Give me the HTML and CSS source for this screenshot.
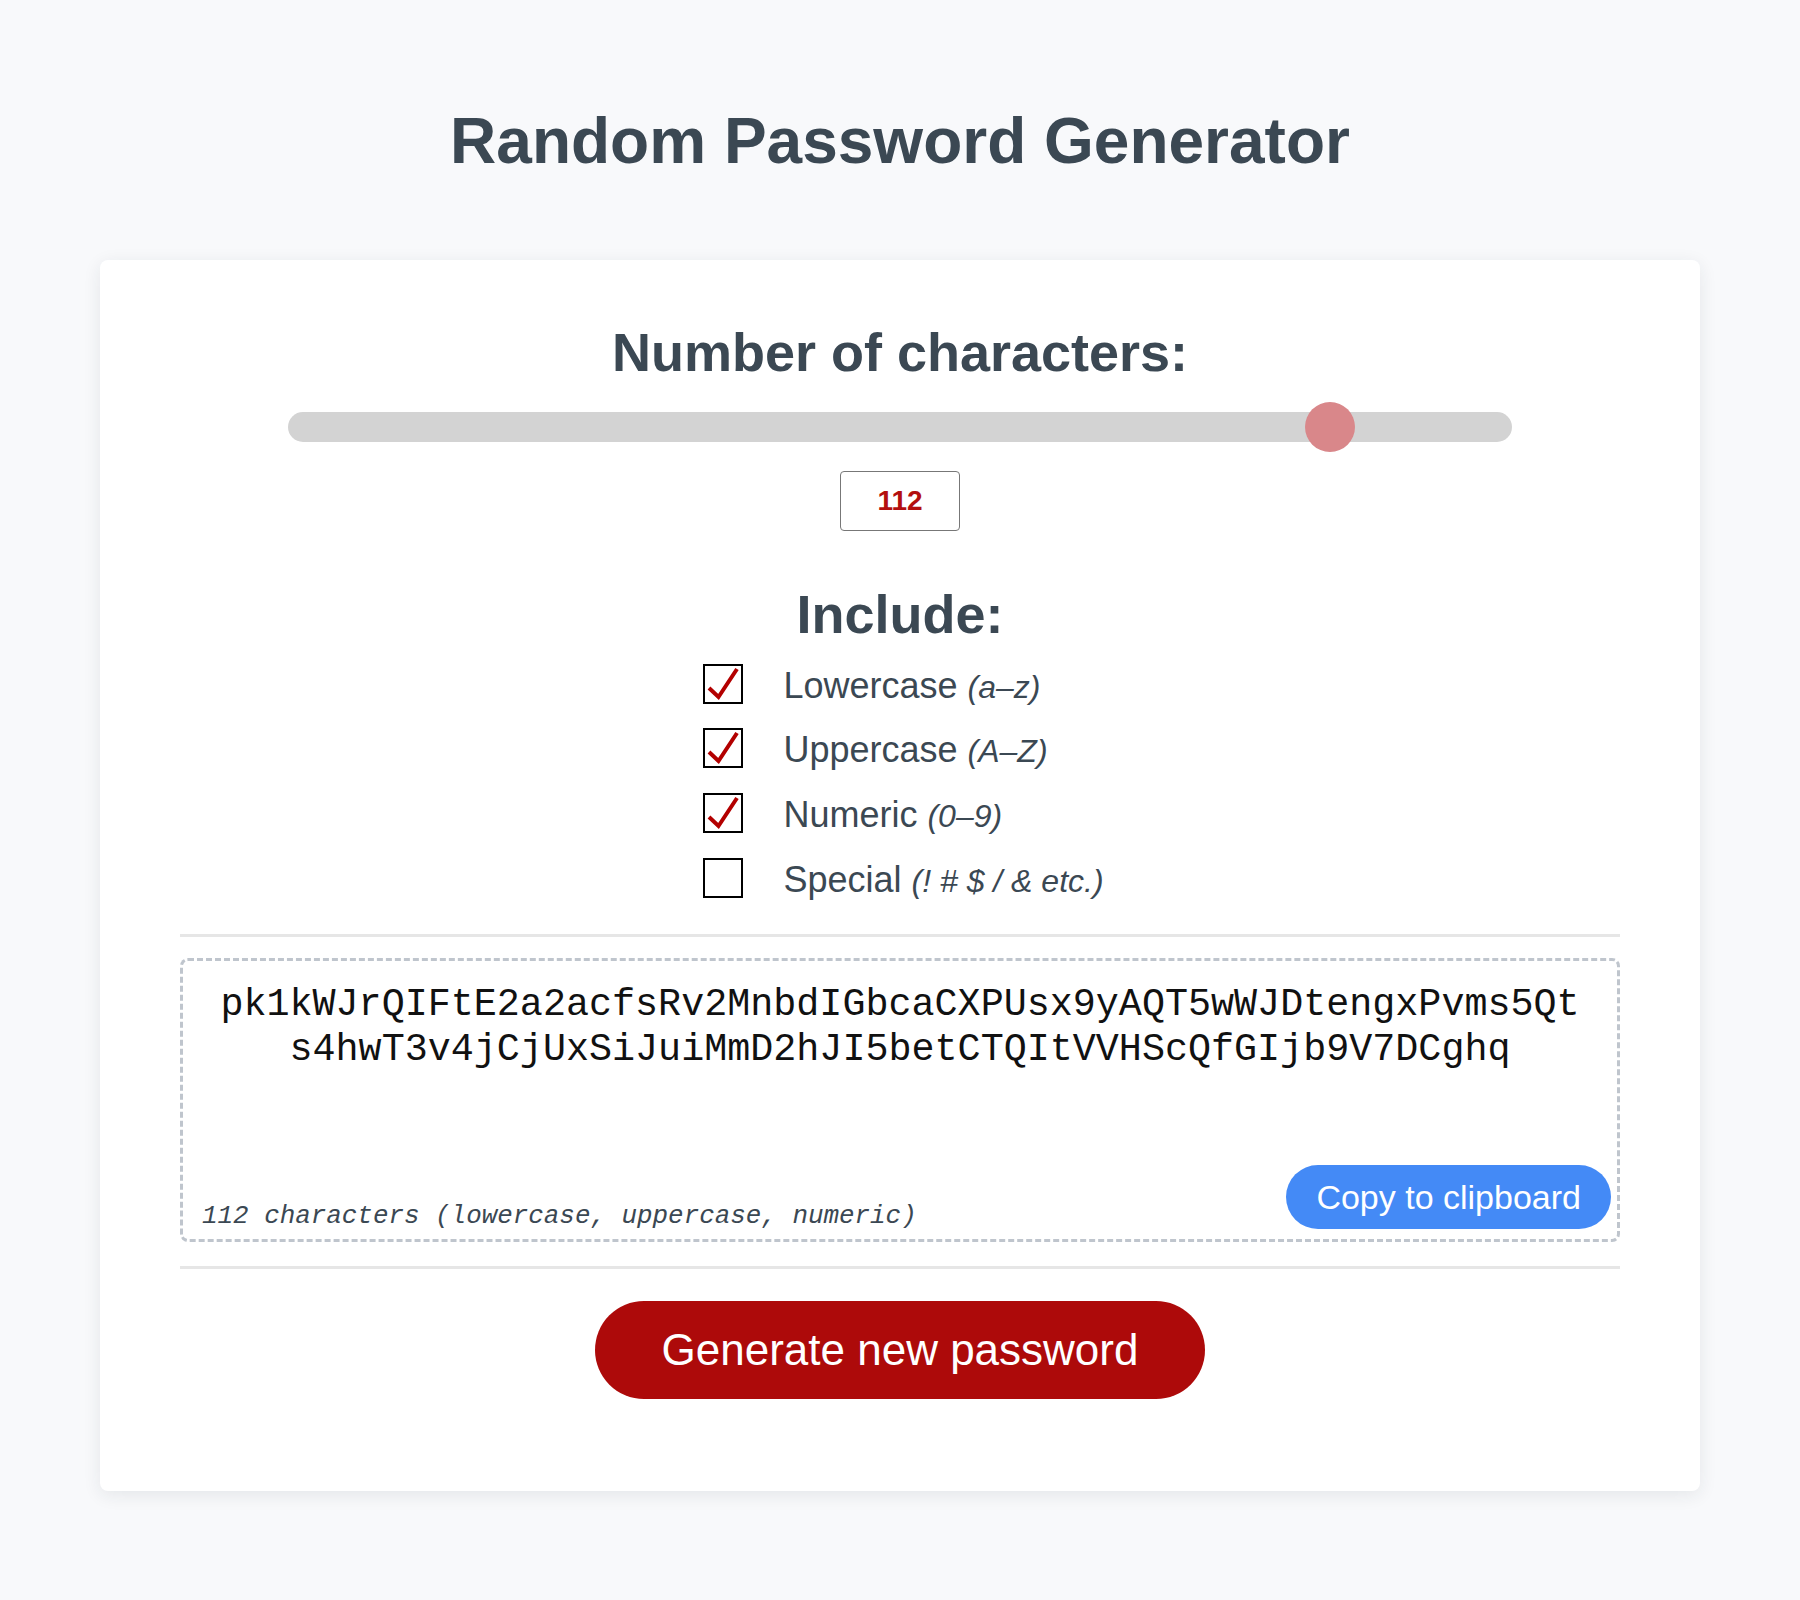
FILE: index.html
```html
<!DOCTYPE html>
<html lang="en">
<head>
<meta charset="utf-8">
<title>Random Password Generator</title>
<link rel="stylesheet" href="styles.css">
</head>
<body>
<main class="page">
  <h1 class="title">Random Password Generator</h1>
  <section class="card">
    <h2 class="heading">Number of characters:</h2>
    <input class="slider" type="range" min="8" max="128" value="112">
    <div class="count">112</div>

    <h2 class="heading include">Include:</h2>
    <div class="options">
      <label class="option"><span class="box"><svg viewBox="0 0 36 36" width="36" height="36"><path d="M4 22 L13.5 31 L32 3" fill="none" stroke="#b30000" stroke-width="4"/></svg></span><span class="opt-text">Lowercase <em>(a–z)</em></span></label>
      <label class="option"><span class="box"><svg viewBox="0 0 36 36" width="36" height="36"><path d="M4 22 L13.5 31 L32 3" fill="none" stroke="#b30000" stroke-width="4"/></svg></span><span class="opt-text">Uppercase <em>(A–Z)</em></span></label>
      <label class="option"><span class="box"><svg viewBox="0 0 36 36" width="36" height="36"><path d="M4 22 L13.5 31 L32 3" fill="none" stroke="#b30000" stroke-width="4"/></svg></span><span class="opt-text">Numeric <em>(0–9)</em></span></label>
      <label class="option"><span class="box"></span><span class="opt-text">Special <em>(! # $ / &amp; etc.)</em></span></label>
    </div>

    <hr class="rule">
    <div class="output">
      <div class="password">pk1kWJrQIFtE2a2acfsRv2MnbdIGbcaCXPUsx9yAQT5wWJDtengxPvms5Qts4hwT3v4jCjUxSiJuiMmD2hJI5betCTQItVVHScQfGIjb9V7DCghq</div>
      <div class="meta">112 characters (lowercase, uppercase, numeric)</div>
      <button class="copy">Copy to clipboard</button>
    </div>
    <hr class="rule">

    <div class="actions">
      <button class="generate">Generate new password</button>
    </div>
  </section>
</main>
</body>
</html>
```
FILE: styles.css
```css
* { box-sizing: border-box; }
html, body { margin: 0; padding: 0; }
body {
  background: #f8f9fb;
  font-family: "Liberation Sans", Arial, Helvetica, sans-serif;
  color: #3b4853;
}
.page {
  padding: 103px 100px 110px;
}
.title {
  margin: 0 0 80px;
  font-size: 64px;
  line-height: 1.2;
  font-weight: 700;
  text-align: center;
  color: #3b4853;
}
.card {
  background: #fff;
  border-radius: 8px;
  box-shadow: 0 4px 18px rgba(30, 40, 60, 0.09);
  padding: 60px 80px 92px;
  text-align: center;
}
.heading {
  margin: 0;
  font-size: 54px;
  line-height: 1.2;
  font-weight: 700;
  color: #3b4853;
}
.slider {
  -webkit-appearance: none;
  appearance: none;
  display: block;
  width: 85%;
  height: 30px;
  margin: 27px auto 0;
  background: #d3d3d3;
  border-radius: 15px;
  outline: none;
}
.slider::-webkit-slider-thumb {
  -webkit-appearance: none;
  appearance: none;
  width: 50px;
  height: 50px;
  border-radius: 50%;
  background: #d9878a;
  border: none;
}
.count {
  width: 120px;
  height: 60px;
  margin: 29px auto 0;
  border: 1.5px solid #777;
  border-radius: 4px;
  display: flex;
  align-items: center;
  justify-content: center;
  font-size: 28px;
  font-weight: 700;
  color: #b30f0f;
}
.include {
  margin-top: 51px;
}
.options {
  display: inline-flex;
  flex-direction: column;
  align-items: flex-start;
  margin-top: 5px;
  padding-left: 7px;
  text-align: left;
}
.option {
  display: flex;
  align-items: center;
  height: 64.7px;
  gap: 40px;
  font-size: 36px;
  color: #3b4853;
}
.opt-text {
  padding-top: 4px;
}
.box {
  width: 40px;
  height: 40px;
  border: 2px solid #000;
  display: flex;
  align-items: center;
  justify-content: center;
  flex: none;
}
.box svg { display: block; }
.opt-text em {
  font-size: 32px;
  font-style: italic;
}
.rule {
  border: none;
  height: 3px;
  background: #e6e6e6;
  margin: 24px 0 0;
}
.output {
  position: relative;
  margin: 21px 0 19px;
  height: 284px;
  border: 3px dashed #bfc5cd;
  border-radius: 8px;
  padding: 22px 30px 0;
}
.password {
  font-family: "Liberation Mono", "Courier New", monospace;
  font-size: 38.4px;
  line-height: 45px;
  color: #111;
  word-break: break-all;
  text-align: center;
}
.meta {
  position: absolute;
  left: 19px;
  bottom: 8px;
  font-family: "Liberation Mono", "Courier New", monospace;
  font-style: italic;
  font-size: 25.9px;
  color: #3b4853;
}
.copy {
  position: absolute;
  right: 6px;
  bottom: 10px;
  height: 64px;
  padding: 0 30px;
  border: none;
  border-radius: 32px;
  background: #448af6;
  color: #fff;
  font-family: "Liberation Sans", Arial, Helvetica, sans-serif;
  font-size: 34px;
}
.actions {
  margin-top: 32px;
}
.generate {
  height: 98px;
  padding: 0 67px;
  border: none;
  border-radius: 49px;
  background: #ad0a0a;
  color: #fff;
  font-family: "Liberation Sans", Arial, Helvetica, sans-serif;
  font-size: 44px;
}
```
